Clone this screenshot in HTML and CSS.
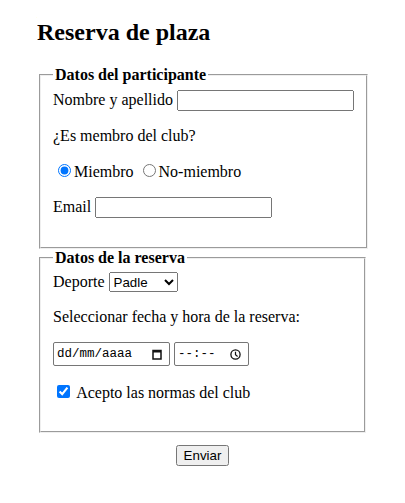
FILE: index.html
```html
<!DOCTYPE html>
<html lang="es">
<head>
  <meta charset="UTF-8">
  <meta name="viewport" content="width=device-width, initial-scale=1.0">
  <title>Reserva de plaza</title>
  <link rel="stylesheet" href="styles.css">
</head>
<body>
  <div class="contenedor">
    <h2>Reserva de plaza</h2>
    <form>
      <fieldset>
        <legend>Datos del participante</legend>
        <div class="fila">
          <label for="nombre">Nombre y apellido</label> <input type="text" id="nombre" class="texto">
        </div>
        <p>¿Es membro del club?</p>
        <p>
          <input type="radio" name="socio" id="miembro" checked><label for="miembro">Miembro</label>
          <input type="radio" name="socio" id="nomiembro"><label for="nomiembro">No-miembro</label>
        </p>
        <p><label for="email">Email</label> <input type="email" id="email" class="texto"></p>
      </fieldset>

      <fieldset>
        <legend>Datos de la reserva</legend>
        <label for="deporte">Deporte</label>
        <select id="deporte">
          <option>Padle</option>
          <option>Tenis</option>
          <option>Squash</option>
        </select>
        <p>Seleccionar fecha y hora de la reserva:</p>
        <p>
          <span class="campo fecha"><span>dd/mm/aaaa</span>
            <svg width="10" height="11" viewBox="0 0 10 11"><rect x="1" y="1.5" width="8" height="8.5" fill="none" stroke="#111" stroke-width="1.5"/><rect x="1" y="1" width="8" height="2.5" fill="#111"/></svg>
          </span>
          <span class="campo hora"><span>--:--</span>
            <svg width="11" height="11" viewBox="0 0 11 11"><circle cx="5.5" cy="5.5" r="4.6" fill="none" stroke="#111" stroke-width="1.3"/><path d="M5.5 2.8 V5.8 L7.6 7.4" fill="none" stroke="#111" stroke-width="1.2"/></svg>
          </span>
        </p>
        <p><input type="checkbox" id="normas" checked> <label for="normas">Acepto las normas del club</label></p>
      </fieldset>

      <div class="enviar">
        <button type="submit">Enviar</button>
      </div>
    </form>
  </div>
</body>
</html>
```

FILE: styles.css
```css
body {
  font-family: "Liberation Serif", "Times New Roman", serif;
  font-size: 16px;
  margin: 8px;
  color: #000;
}
.contenedor {
  width: 331px;
  margin: 0 auto;
}
h2 {
  font-size: 24px;
  margin: 11px 0 19.92px;
}
fieldset {
  margin: 0 2px;
  padding: 0.35em 0.75em 13px;
}
legend {
  font-weight: bold;
  padding: 0 2px;
}
.fila {
  white-space: nowrap;
}
input, select, button {
  font-family: "Liberation Sans", Arial, sans-serif;
  font-size: 13.33px;
}
.texto {
  width: 177px;
  height: 21px;
  box-sizing: border-box;
}
select {
  width: 69px;
  height: 20px;
  box-sizing: border-box;
}
.campo {
  display: inline-flex;
  align-items: center;
  justify-content: space-between;
  box-sizing: border-box;
  height: 24px;
  border: 1px solid #767676;
  border-radius: 2px;
  padding: 0 7px 0 3px;
  font-family: "Liberation Mono", "DejaVu Sans Mono", monospace;
  font-size: 12.5px;
  color: #000;
}
.fecha { width: 117px; }
.hora { width: 75px; }
.enviar {
  text-align: center;
  margin-top: 12px;
}
```
